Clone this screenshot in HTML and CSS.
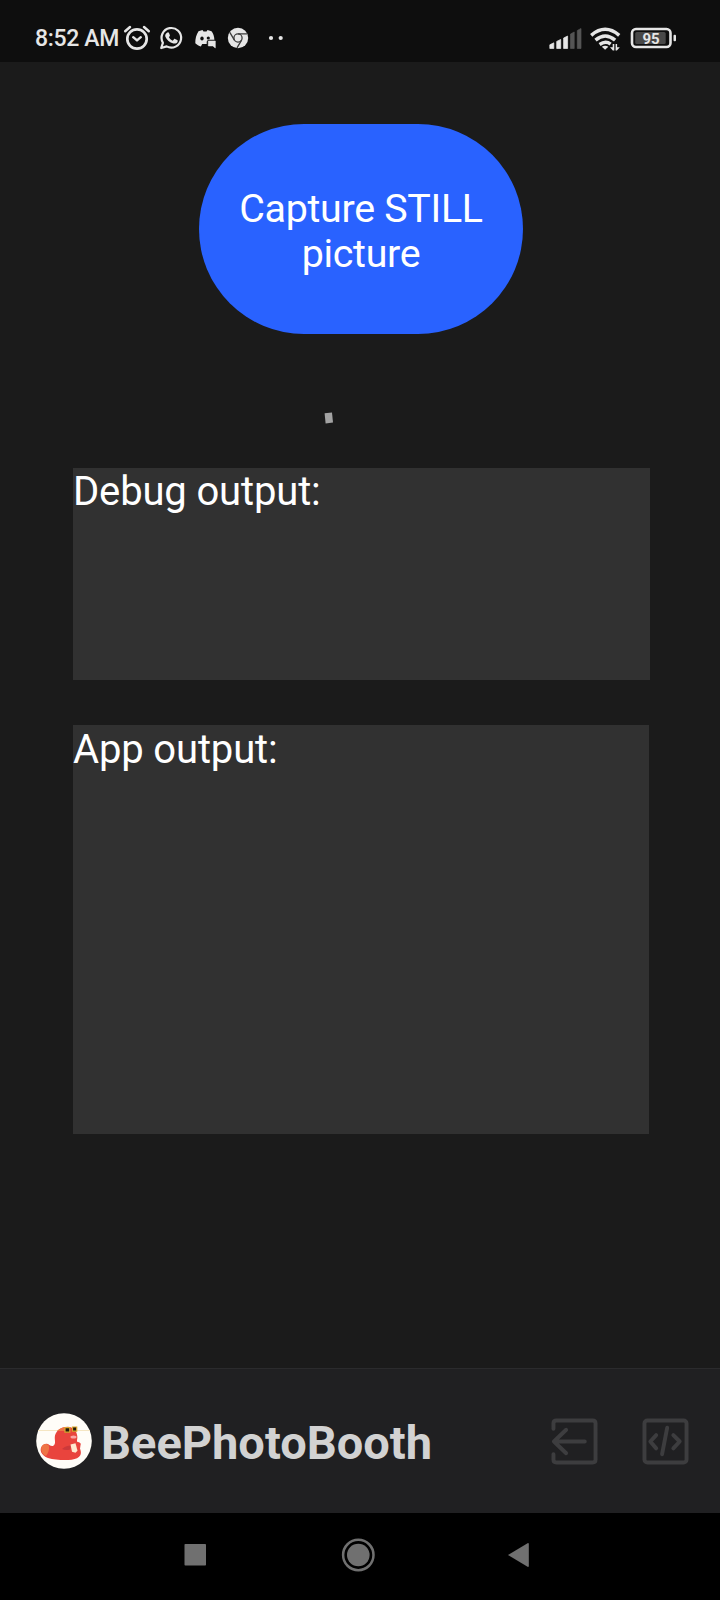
FILE: index.html
```html
<!DOCTYPE html>
<html lang="en">
<head>
<meta charset="utf-8">
<title>BeePhotoBooth</title>
<link rel="stylesheet" href="styles.css">
</head>
<body>
<div class="screen">
  <header class="status">
    <span class="clock">8:52 AM</span>
    <svg class="status-left" width="170" height="30" viewBox="120 23 170 30">
      <g fill="none" stroke="#e6e6e6" stroke-linecap="round" stroke-linejoin="round">
        <circle cx="137" cy="39" r="9.700" stroke-width="2.700"/>
        <path d="M133.200 37.200l3.800 3.200 3.800-3.200" stroke-width="2.400"/>
        <path d="M125.200 31.200l4.800-4.200M148.800 31.200l-4.800-4.200" stroke-width="2.500"/>
        <path d="M161.200 48l1.700-5.200a9.800 9.800 0 1 1 3.700 3.600z" stroke-width="2.200"/>
      </g>
      <path fill="#e6e6e6" d="M167.500 32.400c.8-.2 1.200 0 1.500.7l.9 2.200c.2.500-.5 1.300-1 1.800.8 1.700 2 2.800 3.800 3.600l1.300-1.500c.3-.4.600-.4 1-.2l2.200 1.100c.7.400.6 1 .3 1.800-.6 1.400-2.600 2-4.100 1.600-3.800-1-6.600-3.400-8-6.800-.7-1.800.4-3.700 2.100-4.300z"/>
      <path fill="#e6e6e6" d="M198.500 31.200l4-1.200 1 1.500h3l1-1.500 4 1.200c1.800 2.400 2.700 5 2.900 8.600h-5.200c-1.600 0-2.500 1-2.500 2.600v1.600h-4.500l-1.300 2.400c-2-.5-4-1.500-5.600-3.100-.1-4.600 1-8.800 3.200-12.100z"/>
      <ellipse cx="202" cy="38.500" rx="1.700" ry="2" fill="#0e0e0e"/>
      <ellipse cx="208.300" cy="38" rx="1.600" ry="1.600" fill="#0e0e0e"/>
      <path fill="#e6e6e6" d="M208.300 41h7v6.900l-2.400-2h-4.600z" stroke="#e6e6e6" stroke-width=".6" stroke-linejoin="round"/>
      <circle cx="238" cy="38" r="10.200" fill="#e6e6e6"/>
      <g fill="none" stroke="#3b3b3b" stroke-width="1.300">
        <circle cx="238" cy="38" r="4.100"/>
        <path d="M238 33.900h9M234.400 40.100l-4.600-7.800M241.600 40.100l-4.600 7.800"/>
      </g>
      <circle cx="271" cy="38" r="2.100" fill="#e6e6e6"/>
      <circle cx="280.700" cy="38" r="2.100" fill="#e6e6e6"/>
    </svg>
    <svg class="status-right" width="130" height="30" viewBox="548 23 130 30">
      <g fill="#e6e6e6" stroke="#e6e6e6" stroke-width=".7" stroke-linejoin="round">
        <path d="M549.800 44.800l4-2v5.700h-4zM556.700 41.400l4-2v9.100h-4zM563.600 38l4-2v12.500h-4z"/>
        <path fill="#555" stroke="#555" d="M570.500 34l3.700-2v16.500h-3.700zM577.300 30.500l3.700-2v20h-3.700z"/>
      </g>
      <g fill="none" stroke="#e6e6e6" stroke-width="3.500">
        <path d="M591.200 35.300q14-12 28 0M595.500 40.200q9.800-8.300 19.600 0"/>
        <path d="M599.600 44.500q6-4.300 11-.4"/>
      </g>
      <path fill="#e6e6e6" d="M601.800 46.800q3.400-2.300 6.600 0l-3.300 2.900z"/>
      <path fill="#e6e6e6" d="M614.300 44v6.500h-1.500l-2.800-3.300h2.700V44zM615.600 50.500V44h1.500v3.300h2.700l-2.900 3.200z"/>
      <rect x="632" y="29" width="38.500" height="18" rx="4" fill="none" stroke="#e6e6e6" stroke-width="2.600"/>
      <rect x="635.200" y="32" width="30.500" height="12" rx="1.500" fill="#484848"/>
      <rect x="673.500" y="34.700" width="2.500" height="6.500" rx="1" fill="#e6e6e6"/>
      <text class="charge" x="651" y="43.500" text-anchor="middle">95</text>
    </svg>
  </header>
  <main class="content">
    <button class="capture">Capture STILL<br>picture</button>
    <svg class="speck" width="10" height="12" viewBox="0 0 10 12"><path d="M.6 1.200L8 .6 9 10.600 1.600 11.400z" fill="#a3a3a3"/></svg>
    <section class="output debug">Debug output:</section>
    <section class="output app">App output:</section>
  </main>
  <footer class="footer">
    <svg class="avatar" width="56" height="56" viewBox="0 0 56 56">
      <circle cx="28" cy="28" r="27.800" fill="#fffdf8"/>
      <path d="M2 17.500h52" stroke="#f3dfb5" stroke-width=".8"/>
      <path d="M6 33c-3 3.500-1 9.500 6 12 9 2.500 23 3 29 .3 4.500-2.200 4.500-6 3-9.500l.5-3.500c1-2-1-3.300-3.200-3.300-.8-2.200.4-3.200 0-5.700-.5-5-3.500-9-9.500-9.500-8 .5-12.500 5-13 10-.3 4 1.500 7-1.500 9-2.500 1.200-4.500-2.300-7-2.100-2 .2-3.300 1-4.300 2.300z" fill="#e9443d"/>
      <path d="M6 33c2-2.500 4.500-2.500 6.500-1 1.500 3 0 8-2.500 11-4-1.500-6-6.500-4-10zM21 18c3-3.300 7-4.500 11-4l-2 4z" fill="#ee7445"/>
      <path d="M26 36c3-2.800 6-3.300 9-3.500l-1 4c-3 1-6 .7-8-.5z" fill="#cc393a"/>
      <path d="M34.500 31.500l5-1.300 2 7.500-2 2-3.500-1z" fill="#ffe9cf"/>
      <ellipse cx="37.500" cy="24" rx="3" ry="1.500" fill="#f9a5a5"/>
      <path d="M29 14.700h4.800v4.500H29zM36.500 14h4.200v4.200h-4.200z" fill="#211b0d" stroke="#dca72f" stroke-width="1.200"/>
    </svg>
    <h1 class="name">BeePhotoBooth</h1>
    <div class="actions">
      <svg width="47" height="47" viewBox="0 0 48 48" class="line-icon"><path d="M2.500 11V5.500q0-3 3-3h37q3 0 3 3v37q0 3-3 3h-37q-3 0-3-3V37M34.500 24H3M15.500 12L3 24l12.500 12"/></svg>
      <svg width="47" height="47" viewBox="0 0 48 48" class="line-icon"><rect x="2.500" y="2.500" width="43" height="43" rx="3"/><path d="M14.500 17.500L8.500 24l6 7M32 17.500L38.500 24l-6.500 7M25.700 10l-5.200 27"/></svg>
    </div>
  </footer>
  <nav class="nav">
    <svg width="720" height="87" viewBox="0 1513 720 87" fill="#707070">
      <rect x="184.500" y="1544" width="21.500" height="21.500" rx=".8"/>
      <circle cx="358.300" cy="1555" r="11.300"/>
      <circle cx="358.300" cy="1555" r="15.200" fill="none" stroke="#707070" stroke-width="2.500"/>
      <path d="M508 1555l20-12q.8 0 .8 1v22q0 1-.8 1z"/>
    </svg>
  </nav>
</div>
</body>
</html>
```
FILE: styles.css
```css
body {
  margin: 0;
  background: #1b1b1b;
  font-family: Roboto, "Liberation Sans", sans-serif;
}
svg { display: block; flex: none; }
.screen {
  width: 720px;
  height: 1600px;
  display: flex;
  flex-direction: column;
}
.status {
  box-sizing: border-box;
  height: 62px;
  padding: 23px 42px 9px 35px;
  display: flex;
  align-items: flex-start;
  background: #0e0e0e;
  color: #e6e6e6;
}
.clock {
  width: 85px;
  white-space: nowrap;
  font-size: 23px;
  font-weight: 500;
  line-height: 32px;
  letter-spacing: -.35px;
}
.status-right { margin-left: auto; }
.charge {
  fill: #e6e6e6;
  font-size: 15px;
  font-weight: 700;
}
.content {
  flex: 1;
  display: flex;
  flex-direction: column;
  padding: 62px 70px 0 73px;
}
.capture {
  width: 324px;
  height: 210px;
  margin: 0 0 0 126px;
  padding: 4px 0 0;
  border: 0;
  border-radius: 105px;
  background: #2962ff;
  color: #fff;
  font: 400 39.400px/45px Roboto, "Liberation Sans", sans-serif;
  letter-spacing: -.3px;
}
.speck { margin: 78px 0 44px 251px; }
.output {
  background: #313131;
  color: #fff;
  font-size: 40px;
  line-height: 47px;
  letter-spacing: -.15px;
}
.debug { height: 212px; }
.app {
  box-sizing: border-box;
  width: 576px;
  height: 409px;
  margin-top: 45px;
  padding-top: 1px;
}
.footer {
  box-sizing: border-box;
  height: 145px;
  padding: 0 31px 0 36px;
  display: flex;
  align-items: center;
  border-top: 1px solid #2b2b2d;
  background: #202022;
}
.name {
  margin: 4px 0 0 9px;
  color: #d2d2d2;
  font-size: 47px;
  font-weight: 700;
  line-height: 56px;
}
.actions {
  display: flex;
  gap: 44px;
  margin-left: auto;
}
.line-icon {
  fill: none;
  stroke: #3d3d3f;
  stroke-width: 4;
  stroke-linecap: round;
  stroke-linejoin: round;
}
.nav {
  height: 87px;
  background: #000;
}
```
